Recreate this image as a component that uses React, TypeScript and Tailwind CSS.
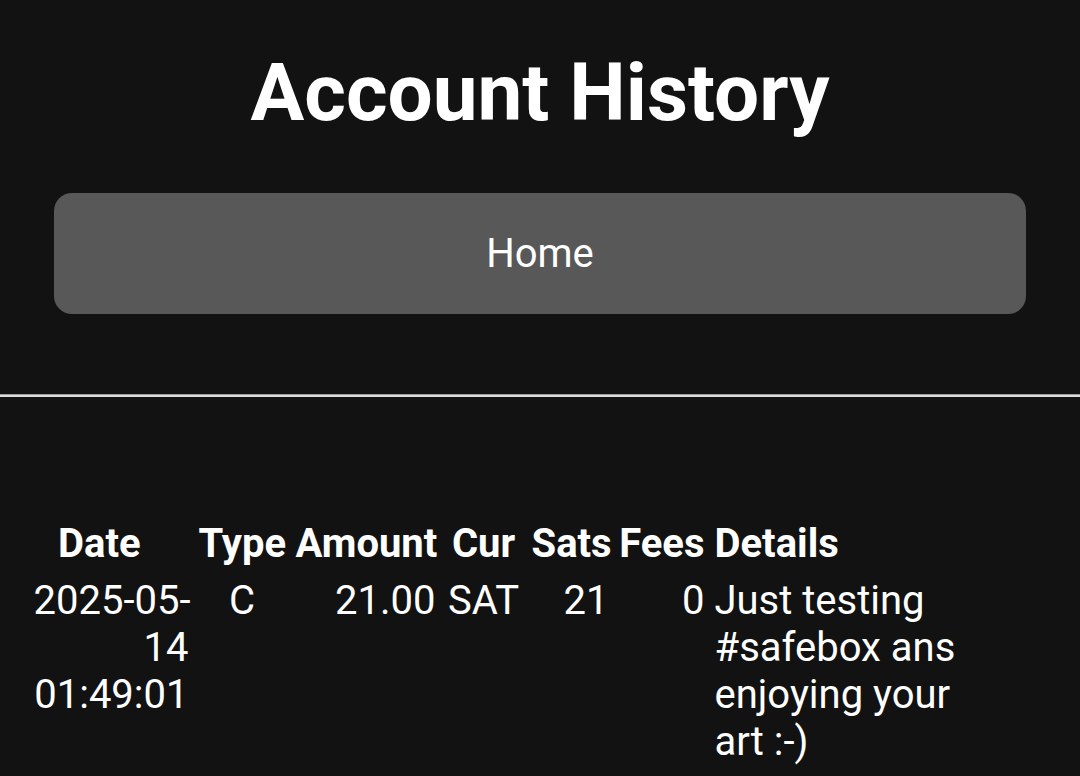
import React from "react";

export default function App() {
  return (
    <div className="min-h-[776px] bg-[#121212] text-white font-['Roboto',sans-serif] overflow-hidden">
      <h1 className="pt-[46px] text-center text-[80px] font-bold leading-[94px]">Account History</h1>
      <div className="px-[54px] mt-[53px]">
        <button className="w-full h-[121px] rounded-[18px] bg-[#585858] text-[40px] leading-[47px] text-white">
          Home
        </button>
      </div>
      <div className="mt-[80px] h-[3px] bg-[#dcdcdc] border-t border-[#9a9a9a]" />
      <table className="mt-[115px] ml-[26px] table-fixed border-separate border-spacing-[5px] w-[956px] text-[40px] leading-[47px]">
        <thead>
          <tr>
            <th className="w-[160px] p-[2.5px] pl-[27px] font-bold text-left">Date</th>
            <th className="w-[92px] p-[2.5px] font-bold text-center">Type</th>
            <th className="w-[145px] p-[2.5px] font-bold text-center">Amount</th>
            <th className="w-[81px] p-[2.5px] font-bold text-center">Cur</th>
            <th className="w-[82px] p-[2.5px] font-bold text-center">Sats</th>
            <th className="w-[91px] p-[2.5px] font-bold text-right">Fees</th>
            <th className="w-[265px] p-[2.5px] font-bold text-left">Details</th>
          </tr>
        </thead>
        <tbody>
          <tr>
            <td className="p-[2.5px] align-top text-right">
              <span className="whitespace-nowrap">2025-05-</span>
              <wbr />
              14 01:49:01
            </td>
            <td className="p-[2.5px] align-top text-center">C</td>
            <td className="p-[2.5px] align-top text-right">21.00</td>
            <td className="p-[2.5px] align-top text-center">SAT</td>
            <td className="p-[2.5px] align-top text-right">21</td>
            <td className="p-[2.5px] align-top text-right">0</td>
            <td className="p-[2.5px] align-top text-left">Just testing #safebox ans enjoying your art :-)</td>
          </tr>
        </tbody>
      </table>
    </div>
  );
}
